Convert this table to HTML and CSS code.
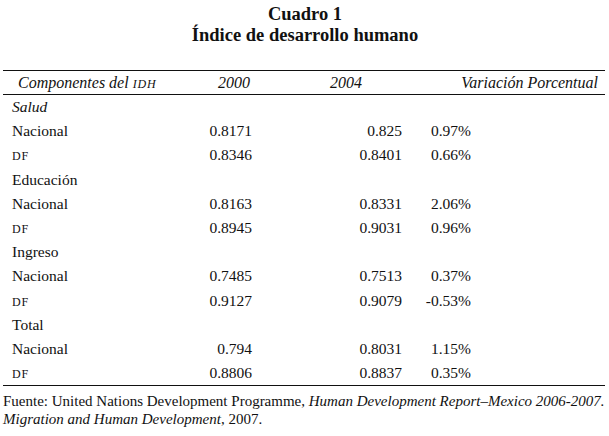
FILE: index.html
```html
<!DOCTYPE html>
<html lang="es">
<head>
<meta charset="utf-8">
<link rel="stylesheet" href="styles.css">
</head>
<body>
<div class="page">
  <h1 class="title"><span>Cuadro 1</span><span>Índice de desarrollo humano</span></h1>
  <table class="idh">
    <colgroup>
      <col class="c0"><col class="c1"><col class="c2"><col class="c3">
    </colgroup>
    <thead>
      <tr>
        <th class="lab">Componentes del <span class="sc">IDH</span></th>
        <th class="h1">2000</th>
        <th class="h2">2004</th>
        <th class="h3">Variación Porcentual</th>
      </tr>
    </thead>
    <tbody>
      <tr><td class="sec it">Salud</td><td></td><td></td><td></td></tr>
      <tr><td>Nacional</td><td class="n1">0.8171</td><td class="n2">0.825</td><td class="n3">0.97%</td></tr>
      <tr><td><span class="sc">DF</span></td><td class="n1">0.8346</td><td class="n2">0.8401</td><td class="n3">0.66%</td></tr>
      <tr><td class="sec">Educación</td><td></td><td></td><td></td></tr>
      <tr><td>Nacional</td><td class="n1">0.8163</td><td class="n2">0.8331</td><td class="n3">2.06%</td></tr>
      <tr><td><span class="sc">DF</span></td><td class="n1">0.8945</td><td class="n2">0.9031</td><td class="n3">0.96%</td></tr>
      <tr><td class="sec">Ingreso</td><td></td><td></td><td></td></tr>
      <tr><td>Nacional</td><td class="n1">0.7485</td><td class="n2">0.7513</td><td class="n3">0.37%</td></tr>
      <tr><td><span class="sc">DF</span></td><td class="n1">0.9127</td><td class="n2">0.9079</td><td class="n3">-0.53%</td></tr>
      <tr><td class="sec">Total</td><td></td><td></td><td></td></tr>
      <tr><td>Nacional</td><td class="n1">0.794</td><td class="n2">0.8031</td><td class="n3">1.15%</td></tr>
      <tr><td><span class="sc">DF</span></td><td class="n1">0.8806</td><td class="n2">0.8837</td><td class="n3">0.35%</td></tr>
    </tbody>
  </table>
  <p class="source">Fuente: United Nations Development Programme, <i>Human Development Report–Mexico 2006-2007.</i><br><i>Migration and Human Development</i>, 2007.</p>
</div>
</body>
</html>
```

FILE: styles.css
```css
html, body {
  margin: 0;
  padding: 0;
  background: #ffffff;
}
body {
  font-family: "Liberation Serif", "Times New Roman", serif;
  color: #111111;
}
.page {
  width: 602px;
  padding: 4px 4px 0 3px;
}
.title {
  margin: 0;
  display: flex;
  flex-direction: column;
  align-items: center;
  font-size: 18.5px;
  line-height: 21px;
  font-weight: bold;
  padding-left: 2px;
}
.idh {
  margin-top: 24px;
  width: 602px;
  border-collapse: collapse;
  table-layout: fixed;
  font-size: 15.5px;
}
.c0 { width: 197px; }
.c1 { width: 52px; }
.c2 { width: 150px; }
.c3 { width: 203px; }
.idh thead tr {
  border-top: 1.5px solid #111;
  border-bottom: 1.5px solid #111;
}
.idh tbody tr:last-child {
  border-bottom: 1.5px solid #111;
}
.idh th {
  font-weight: normal;
  font-style: italic;
  font-size: 16px;
  height: 23px;
  padding: 0;
  text-align: right;
  white-space: nowrap;
}
.idh th.lab {
  text-align: left;
  padding-left: 15px;
}
.idh th.h1 { padding-right: 2px; }
.idh th.h2 { padding-right: 40px; }
.idh th.h3 { padding-right: 7px; }
.idh td {
  height: 24.2px;
  padding: 0;
  white-space: nowrap;
  text-align: left;
}
.idh td:first-child { padding-left: 9px; }
.idh td.n1, .idh td.n2, .idh td.n3 { text-align: right; }
.idh td.n3 { padding-right: 134px; }
.it { font-style: italic; }
.sc {
  font-size: 12px;
  letter-spacing: 0.8px;
  text-transform: uppercase;
}
.source {
  margin: 7px 0 0 0;
  font-size: 15px;
  line-height: 17.5px;
  white-space: nowrap;
}
```
